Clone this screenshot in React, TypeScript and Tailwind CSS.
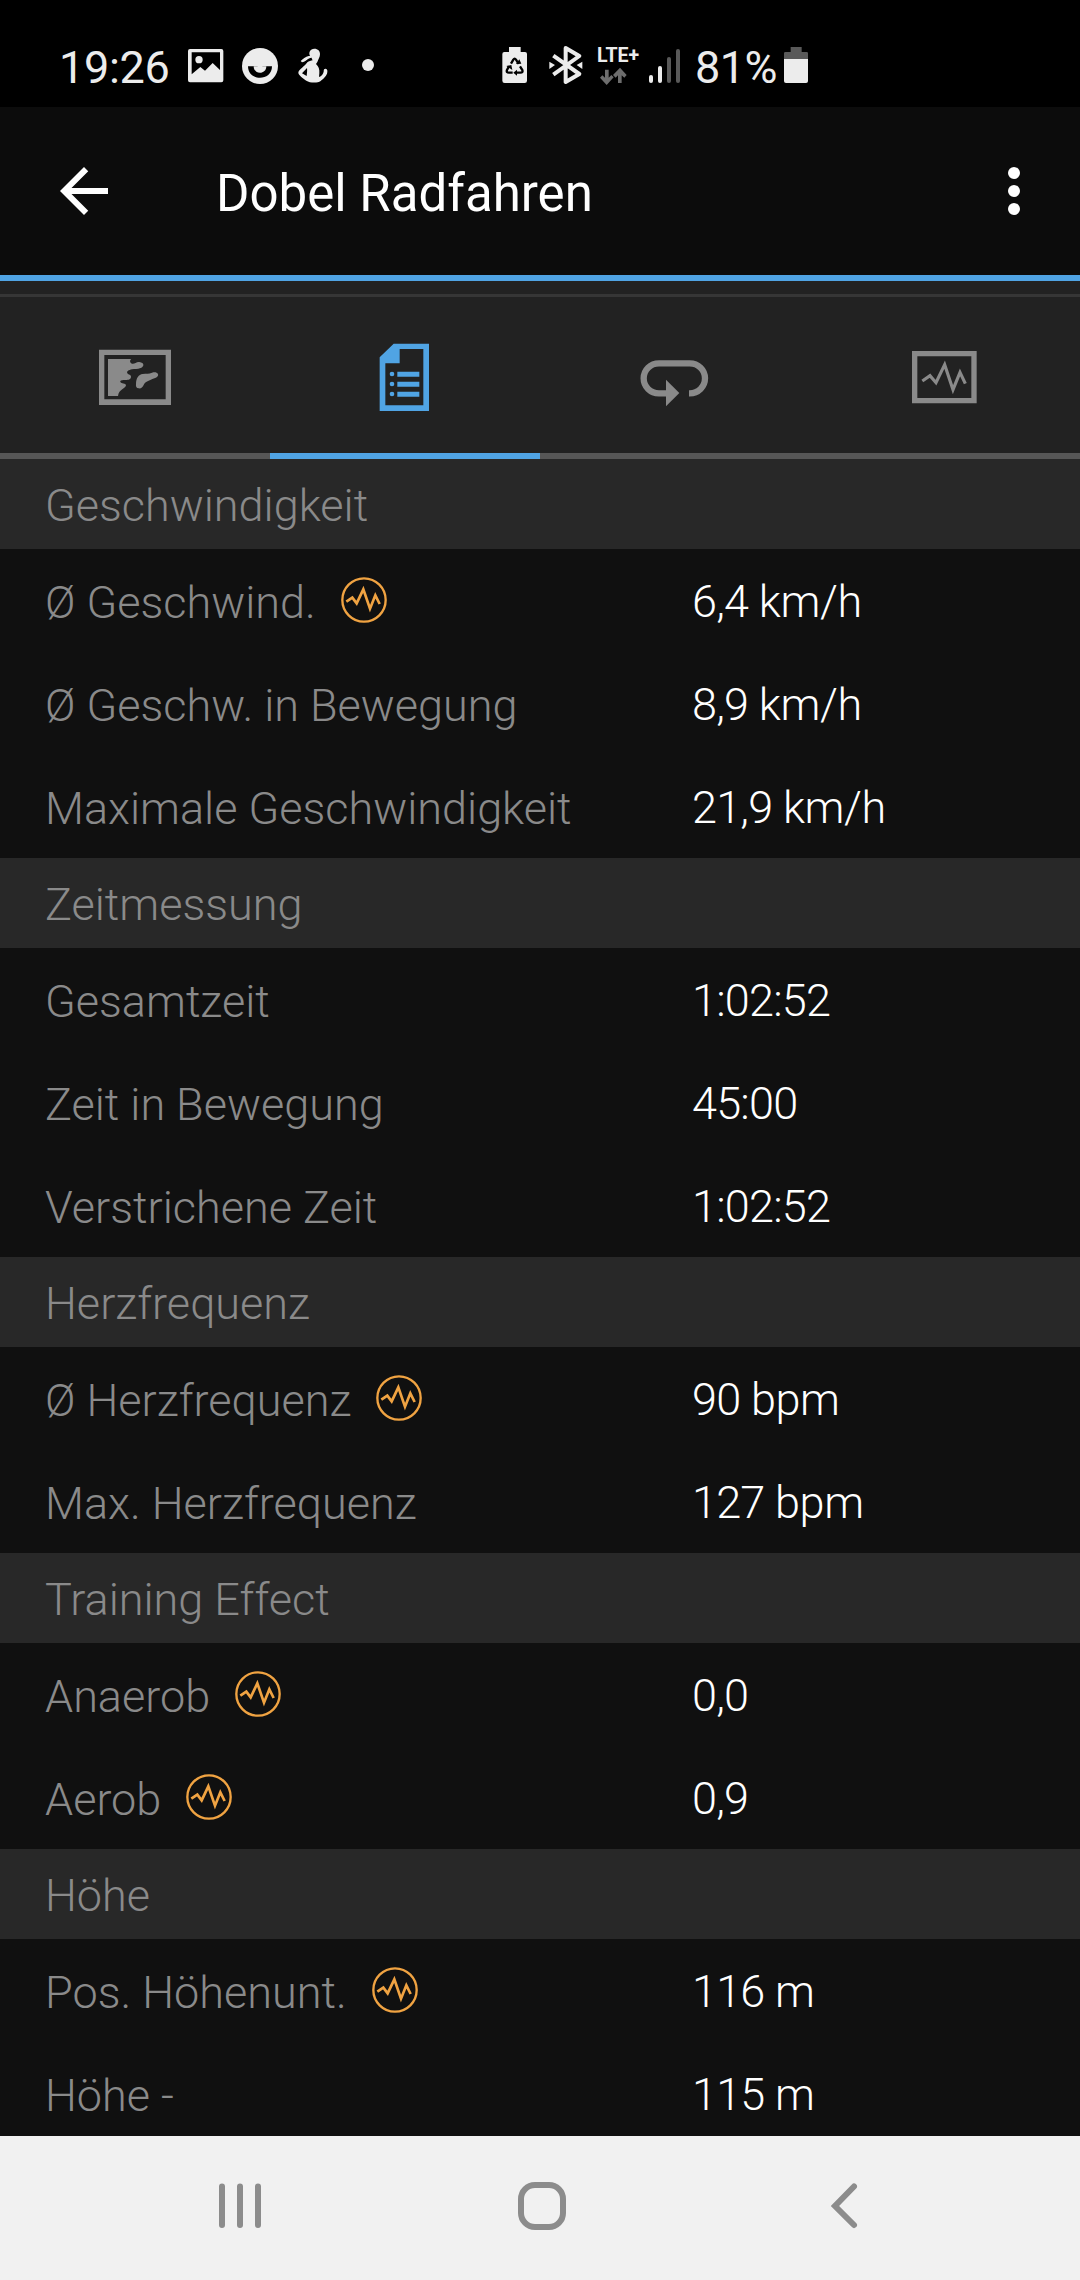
import type { ReactNode } from 'react';

interface Row {
  label: string;
  value: string;
  unit?: string;
  chart?: boolean;
}

interface Section {
  title: string;
  rows: Row[];
}

const sections: Section[] = [
  {
    title: 'Geschwindigkeit',
    rows: [
      { label: 'Ø Geschwind.', value: '6,4', unit: 'km/h', chart: true },
      { label: 'Ø Geschw. in Bewegung', value: '8,9', unit: 'km/h' },
      { label: 'Maximale Geschwindigkeit', value: '21,9', unit: 'km/h' },
    ],
  },
  {
    title: 'Zeitmessung',
    rows: [
      { label: 'Gesamtzeit', value: '1:02:52' },
      { label: 'Zeit in Bewegung', value: '45:00' },
      { label: 'Verstrichene Zeit', value: '1:02:52' },
    ],
  },
  {
    title: 'Herzfrequenz',
    rows: [
      { label: 'Ø Herzfrequenz', value: '90', unit: 'bpm', chart: true },
      { label: 'Max. Herzfrequenz', value: '127', unit: 'bpm' },
    ],
  },
  {
    title: 'Training Effect',
    rows: [
      { label: 'Anaerob', value: '0,0', chart: true },
      { label: 'Aerob', value: '0,9', chart: true },
    ],
  },
  {
    title: 'Höhe',
    rows: [
      { label: 'Pos. Höhenunt.', value: '116', unit: 'm', chart: true },
      { label: 'Höhe -', value: '115', unit: 'm' },
    ],
  },
];

// Tab icons share a 270 unit box
function MapIcon() {
  return (
    <svg className="h-[90px] w-[90px] text-[#8a8a8a]" viewBox="30 36 270 270" fill="currentColor">
      <path fillRule="evenodd" d="M57 89h216v166H57zM73 105v133h184V105z" />
      <path d="M84 117h70c-6 4-4 12 2 14 8 2 12-6 22-5 16 2 15 14 4 18-10 4-18 2-26 4-10 2-17 6-14 12 3 5 12 4 11 11-1 9-11 9-19 9-8-1-15 2-13 6 3 6 16 3 17 10 0 9-22 12-24 32H84z" />
      <path d="M168 192c0-18 8-28 20-30 12-2 18 0 28-4 14-5 22 4 17 11-4 6-14 7-22 11-10 5-16 6-20 15-4 8-8 11-15 10-7-1-9-5-8-13z" />
    </svg>
  );
}

function DetailsIcon() {
  return (
    <svg className="h-[90px] w-[90px] text-[#50a4e4]" viewBox="840 36 270 270" fill="currentColor">
      <path fillRule="evenodd" d="M941 71h106v202H899V112zM959 87v43h-43v126h114V87z" />
      <circle cx="936" cy="162" r="7" />
      <circle cx="936" cy="192" r="7" />
      <circle cx="936" cy="222" r="7" />
      <path d="M952 155h66v15h-66zM952 185h66v15h-66zM952 215h66v15h-66z" />
    </svg>
  );
}

function LapsIcon() {
  return (
    <svg className="h-[90px] w-[90px] text-[#8a8a8a]" viewBox="30 36 270 270">
      <path
        d="M207 220h2c26 0 46-20 46-45s-20-45-46-45h-92c-26 0-46 20-46 45s20 45 46 45h23"
        fill="none"
        stroke="currentColor"
        strokeWidth="19"
      />
      <path d="M138 179l40 40-40 40z" fill="currentColor" />
    </svg>
  );
}

function GraphIcon() {
  return (
    <svg className="h-[90px] w-[90px] text-[#8a8a8a]" viewBox="840 36 270 270" fill="none" stroke="currentColor">
      <path d="M884 101h178v141H884z" strokeWidth="16" />
      <path d="M907 183l23-16 18 21 26-54 25 75 21-52 16 34" strokeWidth="9.5" />
    </svg>
  );
}

function ChartBadge() {
  return (
    <svg className="ml-[25px] mt-px h-[46px] w-[46px] shrink-0 text-[#f0a342]" viewBox="0 0 138 138" fill="none" stroke="currentColor">
      <circle cx="69" cy="69" r="65" strokeWidth="7" />
      <path d="M16 74l18-12 13 17 20-42 20 58 16-40 13 26" strokeWidth="8" />
    </svg>
  );
}

const tabs: { id: string; icon: ReactNode; active?: boolean }[] = [
  { id: 'map', icon: <MapIcon /> },
  { id: 'details', icon: <DetailsIcon />, active: true },
  { id: 'laps', icon: <LapsIcon /> },
  { id: 'graphs', icon: <GraphIcon /> },
];

function StatusBar() {
  return (
    <div className="flex h-[107px] shrink-0 items-start bg-black pt-[44px] text-[#ececec]">
      <span className="ml-[59px] mt-px w-[112px] whitespace-nowrap text-[45px] leading-[46px] tracking-[-0.3px]">19:26</span>

      {/* Gallery */}
      <svg className="ml-[16px] mt-px h-[42px] w-[38px]" viewBox="0 0 114 126" fill="currentColor">
        <path
          fillRule="evenodd"
          d="M9 12h94q6 0 6 6v88q0 6-6 6H9q-6 0-6-6V18q0-6 6-6zM14 22v66l26-22 14 11 23-23 22 21V22z"
        />
        <circle cx="36" cy="44" r="11" />
      </svg>

      {/* Smiley */}
      <svg className="ml-[16px] mt-[3px] h-[38px] w-[38px]" viewBox="0 0 114 114">
        <circle cx="57" cy="57" r="54" fill="currentColor" />
        <path d="M21 58h29c-2 14 16 14 14 0h29c0 46-72 46-72 0z" fill="#000" />
        <path d="M38 58h38c0 26-38 26-38 0z" fill="currentColor" />
      </svg>

      {/* Fitness figure */}
      <svg className="ml-[18px] mt-[4px] h-[36px] w-[32px]" viewBox="775 55 96 108" fill="currentColor">
        <path d="M827 57c11 0 17 7 17 16 0 10-5 15-8 24l-4 6c8 7 11 16 10 28l-1 11c8-3 12-9 14-16 0-6 1-9 5-9 5 0 7 4 6 10-1 12-12 20-20 27-10 7-32 6-43-1-8-6-24-17-24-24 0-8 21-21 27-31 4-4 12-5 16-6-2-3-3-5-3-8-6 1-10 3-16 8-4 3-7 5-13 6l-4-4c6-6 15-13 24-15h4c-5-10 0-22 13-22z" />
        <path d="M805 115l-15 16 14 8c1-9 2-16 1-24z" fill="#000" />
      </svg>

      <span className="ml-[33px] mt-[15px] h-3 w-3 rounded-full bg-[#ececec]" />

      {/* Battery saver */}
      <svg className="ml-[127px] mt-[2px] h-[38px] w-[27px]" viewBox="64 48 81 114" fill="currentColor">
        <path d="M88 51h35v15h13q6 0 6 6v80q0 7-7 7H75q-7 0-7-7V72q0-6 6-6h14z" />
        <g fill="none" stroke="#000" strokeWidth="7">
          <path d="M94 101l7-12q4-6 8 0l8 13" />
          <path d="M88 109l-6 11q-3 8 6 8h11" />
          <path d="M121 109l7 11q3 8-6 8h-13" />
        </g>
        <path d="M109 102l16-1-6-13zM80 108l15-3 3 15zM112 119v18l-11-9z" fill="#000" />
      </svg>

      {/* Bluetooth */}
      <svg className="ml-[20px] mt-[1px] h-[40px] w-[36px]" viewBox="203 45 108 120">
        <path
          d="M219 77l78 55-41 24V54l41 24-78 56"
          fill="none"
          stroke="currentColor"
          strokeWidth="12"
          strokeLinejoin="round"
        />
        <path d="M207 95l17 10-17 12zM306 95l-17 10 17 12z" fill="currentColor" />
      </svg>

      {/* Network type and traffic arrows */}
      <div className="ml-[13px] mt-px flex w-[46px] flex-col">
        <span className="whitespace-nowrap text-[19.5px] font-bold leading-[22px]">LTE+</span>
        <svg className="ml-[3px] h-[19px] w-[27px]" viewBox="363 111 81 57" fill="#6d6d6d">
          <path d="M378 119h11v24l8-8 7 7-21 23-20-22 7-7 8 7z" />
          <path d="M423 113l20 22-7 8-8-7v23h-11v-23l-7 7-8-8z" />
        </svg>
      </div>

      {/* Signal */}
      <div className="ml-[6px] mt-[5px] flex h-[34px] items-end gap-[5px]">
        <span className="h-[8px] w-1 rounded-full bg-[#ececec]" />
        <span className="h-[17px] w-1 rounded-full bg-[#ececec]" />
        <span className="h-[26px] w-1 rounded-full bg-[#595959]" />
        <span className="h-[34px] w-1 rounded-full bg-[#595959]" />
      </div>

      <span className="ml-[15px] mt-px w-[84px] whitespace-nowrap text-[45px] leading-[46px] tracking-[-0.5px]">81%</span>

      {/* Battery */}
      <svg className="ml-[5px] mt-[3px] h-[36px] w-[24px]" viewBox="0 0 72 108">
        <path d="M20 0h33v15h15q4 0 4 4v17H0V19q0-4 4-4h16z" fill="#595959" />
        <path d="M0 36h72v66q0 6-6 6H6q-6 0-6-6z" fill="currentColor" />
      </svg>
    </div>
  );
}

function AppBar() {
  return (
    <div className="flex h-[174px] shrink-0 items-start border-b-6 border-[#50a4e4] bg-[#0c0c0c] pt-12">
      <svg className="ml-12 h-[72px] w-[72px]" viewBox="0 0 24 24" fill="#fff">
        <path d="M20 11H7.83l5.59-5.59L12 4l-8 8 8 8 1.41-1.41L7.83 13H20v-2z" />
      </svg>
      <h1 className="ml-[96px] mt-[9px] flex-1 whitespace-nowrap text-[51px] leading-[60px] text-white">Dobel Radfahren</h1>
      <div className="mr-[60px] mt-[12px] flex flex-col gap-1.5">
        <span className="h-3 w-3 rounded-full bg-white" />
        <span className="h-3 w-3 rounded-full bg-white" />
        <span className="h-3 w-3 rounded-full bg-white" />
      </div>
    </div>
  );
}

function TabBar() {
  return (
    <div className="shrink-0 bg-[#222222] pt-[13px]">
      <div className="h-[3px] bg-[#363636]" />
      <div className="grid h-[162px] grid-cols-4">
        {tabs.map((tab) => (
          <div
            key={tab.id}
            className={`flex justify-center border-b-6 pt-[35px] ${tab.active ? 'border-[#50a4e4]' : 'border-[#575757]'}`}
          >
            {tab.icon}
          </div>
        ))}
      </div>
    </div>
  );
}

function NavBar() {
  return (
    <div className="flex h-36 shrink-0 items-center bg-[#f1f1f1] pb-1 text-[#8c8c8c]">
      <svg className="ml-[216px] h-12 w-12" viewBox="0 0 48 48" fill="none" stroke="currentColor" strokeWidth="6" strokeLinecap="round">
        <path d="M6 4.500v38.500M24 4.500v38.500M42 4.500v38.500" />
      </svg>
      <svg className="ml-[254px] h-12 w-12" viewBox="0 0 48 48" fill="none" stroke="currentColor" strokeWidth="6">
        <rect x="3" y="3" width="42" height="42" rx="14" />
      </svg>
      <svg className="ml-[254px] h-12 w-12" viewBox="0 0 48 48" fill="none" stroke="currentColor" strokeWidth="6" strokeLinecap="round">
        <path d="M34 4.500L15 24l19 19" />
      </svg>
    </div>
  );
}

export default function App() {
  return (
    <div className="flex h-[2280px] w-[1080px] flex-col overflow-hidden bg-[#101010] font-['Roboto',sans-serif]">
      <StatusBar />
      <AppBar />
      <TabBar />

      <div className="min-h-0 flex-1 overflow-hidden text-[45px] font-light leading-[54px]">
        {sections.map((section) => (
          <section key={section.title}>
            <h2 className="h-[90px] bg-[#282828] pl-[45px] pt-[20px] text-[#8a8a8a]">{section.title}</h2>
            {section.rows.map((row) => (
              <div key={row.label} className="flex h-[103px]">
                <div className="flex w-[692px] items-start pl-[45px] pt-[27px] text-[#8a8a8a]">
                  <span className="whitespace-nowrap">{row.label}</span>
                  {row.chart && <ChartBadge />}
                </div>
                <span className="whitespace-nowrap pt-[26px] tracking-[-0.4px] text-white">
                  <span className="tracking-[-0.8px]">{row.value}</span>
                  {row.unit && ` ${row.unit}`}
                </span>
              </div>
            ))}
          </section>
        ))}
      </div>

      <NavBar />
    </div>
  );
}
